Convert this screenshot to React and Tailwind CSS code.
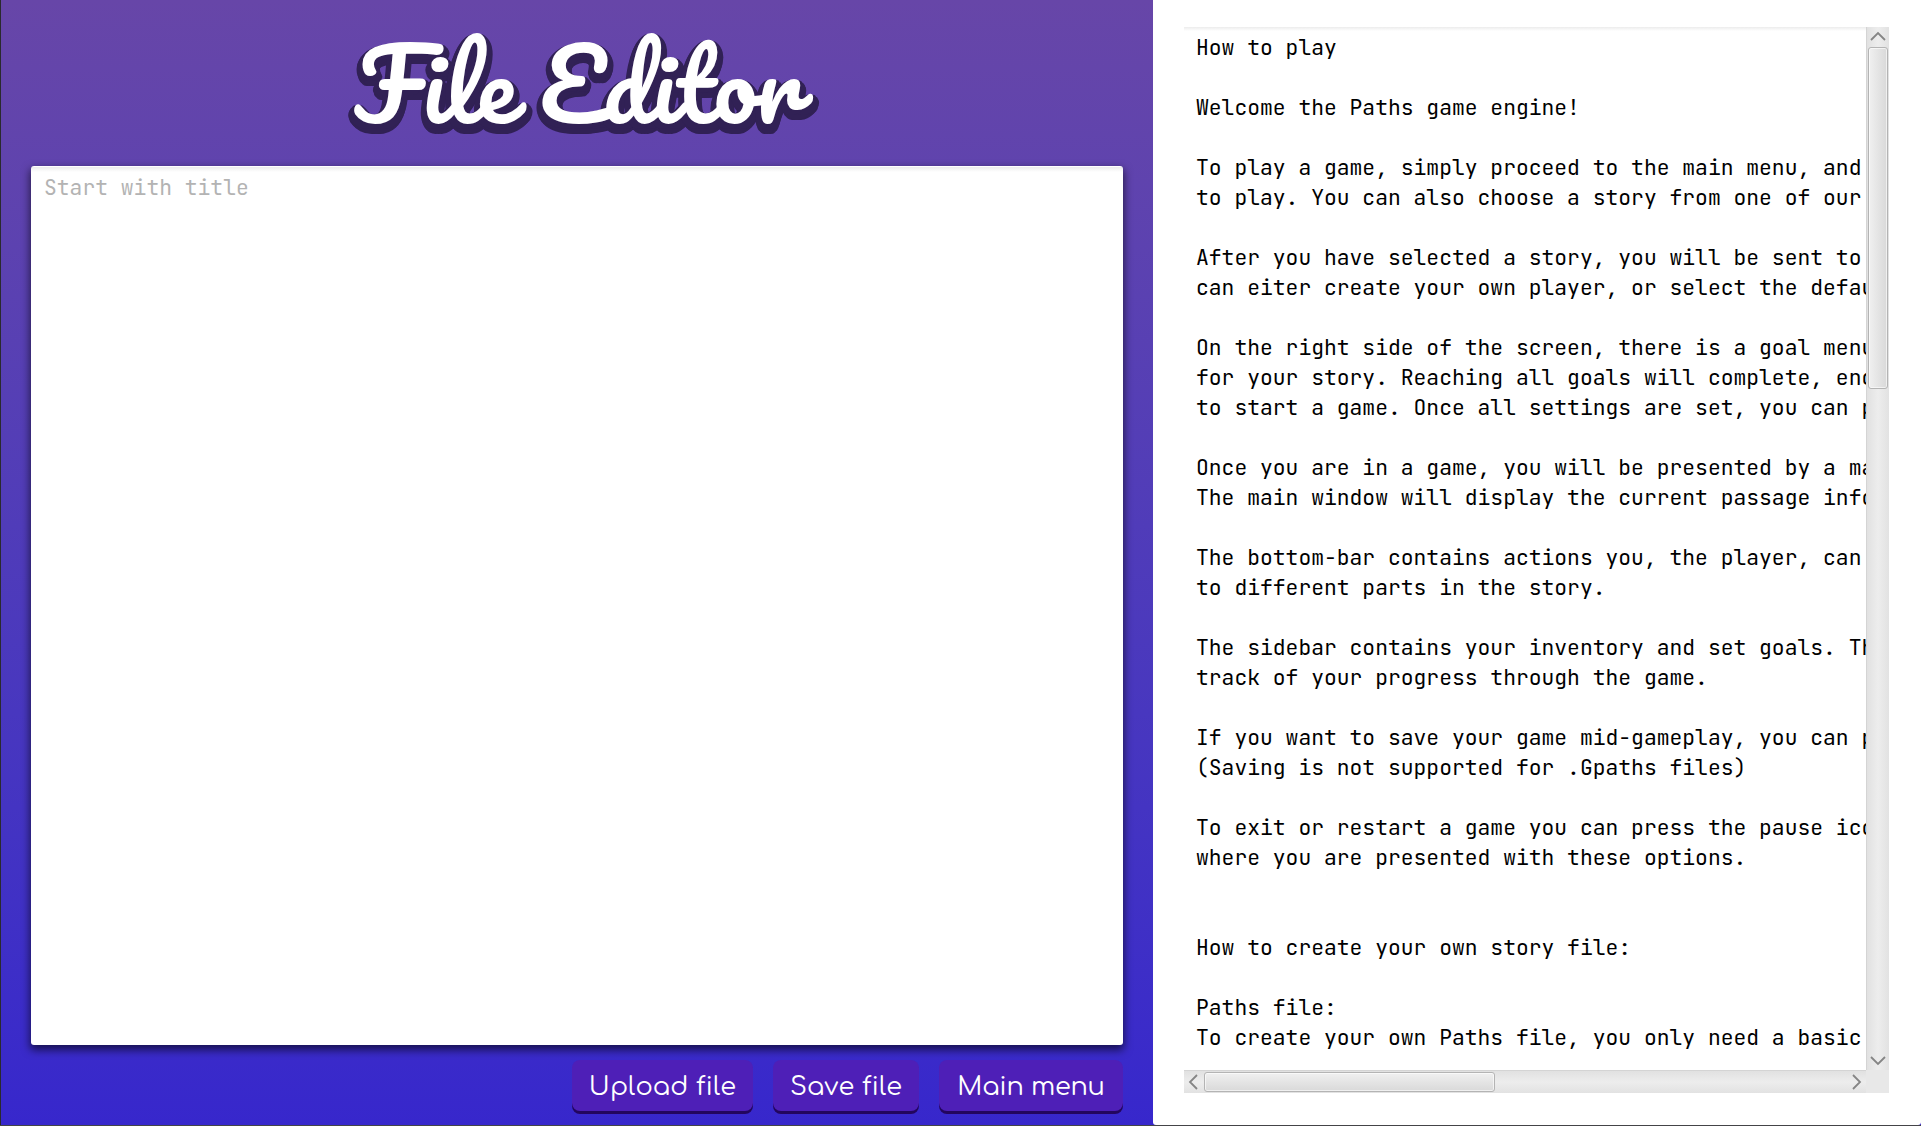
const GUIDE = `How to play

Welcome the Paths game engine!

To play a game, simply proceed to the main menu, and
to play. You can also choose a story from one of our

After you have selected a story, you will be sent to
can eiter create your own player, or select the default

On the right side of the screen, there is a goal menu
for your story. Reaching all goals will complete, end
to start a game. Once all settings are set, you can press

Once you are in a game, you will be presented by a main
The main window will display the current passage info

The bottom-bar contains actions you, the player, can
to different parts in the story.

The sidebar contains your inventory and set goals. Th
track of your progress through the game.

If you want to save your game mid-gameplay, you can press
(Saving is not supported for .Gpaths files)

To exit or restart a game you can press the pause icon
where you are presented with these options.


How to create your own story file:

Paths file:
To create your own Paths file, you only need a basic`;

const MONO = "font-['JetBrains_Mono','DejaVu_Sans_Mono',monospace] text-[21.333px] leading-[30px]";

function Arrow({ points, w, h }) {
  return (
    <svg width={w} height={h} viewBox={`0 0 ${w} ${h}`} fill="none" stroke="#858585" strokeWidth="1.8">
      <polyline points={points} />
    </svg>
  );
}

function ActionButton({ label, className }) {
  return (
    <button
      className={`h-[51px] rounded-[8px] bg-[#4e1fb7] pt-[3px] text-center font-['Comfortaa','Lato',sans-serif] text-[25.6px] leading-[30px] font-[370] whitespace-nowrap text-white shadow-[0_3px_0_#23065f] [font-feature-settings:'liga'_0,'kern'_0] ${className}`}
    >
      {label}
    </button>
  );
}

function Editor() {
  return (
    <section className="flex w-[1153px] flex-col border-l border-[#2a2a2e] bg-linear-to-b from-[#6746a8] to-[#3727cc]">
      <h1 className="h-[166px] text-center font-['Pacifico','Lato',cursive] text-[95.4px] leading-[167px] font-normal whitespace-nowrap text-white [font-feature-settings:'calt'_0,'liga'_0,'clig'_0] [text-shadow:-6px_5px_#312155,6px_5px_#312155,0_10px_#312155,-3px_9.5px_#312155,3px_9.5px_#312155,-5px_8px_#312155,5px_8px_#312155,-5px_3px_#312155,5px_3px_#312155,-3px_1px_#312155,3px_1px_#312155]">
        File Editor
      </h1>
      <div className={`mx-[30px] h-[879px] rounded-[3px] bg-white bg-[linear-gradient(#ffffff_1px,#ececec_1px,#ffffff_6px)] px-[13px] pt-[6px] text-[#b3b3b3] shadow-[0_4px_9px_1px_rgba(0,0,0,0.6)] ${MONO}`}>
        Start with title
      </div>
      <div className="mt-[15px] flex justify-end gap-[20px] pr-[30px]">
        <ActionButton label="Upload file" className="w-[181px] tracking-[0.1px]" />
        <ActionButton label="Save file" className="w-[146px] tracking-[0.1px]" />
        <ActionButton label="Main menu" className="w-[184px] tracking-[-0.2px]" />
      </div>
    </section>
  );
}

function Guide() {
  return (
    <section className="flex-1 rounded-b-[3px] bg-white pt-[27px] pl-[31px]">
      <div className="grid h-[1066px] w-[705px] grid-cols-[682px_23px] grid-rows-[1043px_23px]">
        <pre className={`overflow-hidden bg-[linear-gradient(#ececec_0px,#ffffff_4px)] pt-[5px] pl-[12px] text-black ${MONO}`}>
          {GUIDE}
        </pre>
        <div className="flex flex-col items-center border-l border-[#d4d4d4] bg-linear-to-r from-[#e1e1e1] via-[#ededed] to-[#e2e2e2]">
          <div className="flex h-[20px] items-center pb-[2px]">
            <Arrow w={16} h={10} points="1,9 8,2 15,9" />
          </div>
          <div className="h-[342px] w-[20px] rounded-[3px] border border-[#b4b4b4] bg-linear-to-r from-[#f0f0f0] to-[#d9d9d9] shadow-[inset_0_0_0_1px_rgba(255,255,255,0.6)]" />
          <div className="mt-auto flex h-[18px] items-center">
            <Arrow w={16} h={10} points="1,1 8,8 15,1" />
          </div>
        </div>
        <div className="flex items-center border-t border-[#d4d4d4] bg-linear-to-b from-[#e1e1e1] via-[#ededed] to-[#e2e2e2]">
          <div className="flex w-[20px] justify-center pr-[2px]">
            <Arrow w={10} h={16} points="9,1 2,8 9,15" />
          </div>
          <div className="h-[20px] w-[291px] rounded-[3px] border border-[#b4b4b4] bg-linear-to-b from-[#f0f0f0] to-[#d9d9d9] shadow-[inset_0_0_0_1px_rgba(255,255,255,0.6)]" />
          <div className="ml-auto flex w-[18px] justify-center">
            <Arrow w={10} h={16} points="1,1 8,8 1,15" />
          </div>
        </div>
        <div className="bg-[#e8e8e8]" />
      </div>
    </section>
  );
}

export default function App() {
  return (
    <main className="flex h-[1126px] w-[1921px] overflow-hidden border-b border-[#444448] bg-[#3727cc]">
      <Editor />
      <Guide />
    </main>
  );
}
